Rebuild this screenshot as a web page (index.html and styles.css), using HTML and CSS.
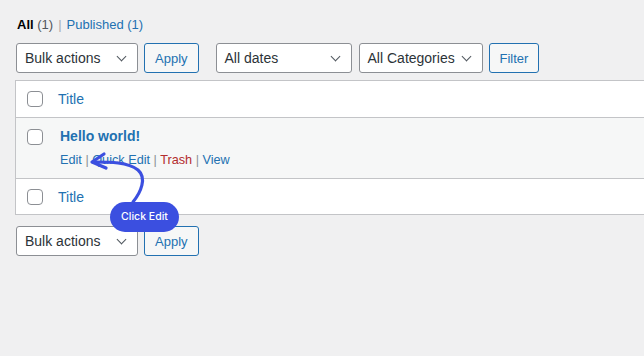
FILE: index.html
```html
<!DOCTYPE html>
<html lang="en">
  <head>
    <meta charset="UTF-8">
    <meta name="viewport" content="width=device-width, initial-scale=1.0">
    <title>Posts</title>
    <link rel="stylesheet" href="styles.css">
  </head>
  <body>
    <div class="page">
      <ul class="views">
        <li class="current">All <span class="count">(1)</span></li>
        <li class="sep">|</li>
        <li><a href="#">Published <span class="count">(1)</span></a></li>
      </ul>

      <div class="tablenav">
        <div class="select w-bulk">Bulk actions</div>
        <button class="btn">Apply</button>
        <div class="select w-dates gap-left">All dates</div>
        <div class="select w-cats">All Categories</div>
        <button class="btn">Filter</button>
      </div>

      <div class="list-table">
        <div class="row head">
          <span class="check"></span>
          <a href="#" class="col-title">Title</a>
        </div>
        <div class="row post">
          <span class="check"></span>
          <div class="post-body">
            <a href="#" class="post-title">Hello world!</a>
            <div class="row-actions">
              <a href="#">Edit</a> <span class="bar">|</span>
              <a href="#">Quick Edit</a> <span class="bar">|</span>
              <a href="#" class="trash">Trash</a> <span class="bar">|</span>
              <a href="#">View</a>
            </div>
          </div>
        </div>
        <div class="row foot">
          <span class="check"></span>
          <a href="#" class="col-title">Title</a>
        </div>
      </div>

      <div class="tablenav bottom">
        <div class="select w-bulk">Bulk actions</div>
        <button class="btn">Apply</button>
      </div>

      <!-- walkthrough hint -->
      <svg class="hint-arrow" width="644" height="356" viewBox="0 0 644 356">
        <path d="M133 202 C 141 192, 147 178, 138 170 C 128 162, 110 162, 93 162" />
        <path d="M104 154 L92 162 L106 168" />
      </svg>
      <div class="hint">Click Edit</div>
    </div>
  </body>
</html>
```

FILE: styles.css
```css
body {
  margin: 0;
  background-color: #f0f0f1;
  color: #3c434a;
  font-family: "Liberation Sans", Arial, sans-serif;
  font-size: 13px;
  overflow: hidden;
}

a {
  color: #2271b1;
  text-decoration: none;
}

.page {
  position: relative;
  width: 644px;
  height: 356px;
  padding-left: 16px;
  box-sizing: border-box;
  overflow: hidden;
}

.views {
  list-style: none;
  margin: 0;
  padding: 15px 0 0 1px;
  display: flex;
  gap: 5px;
  height: 20px;
  line-height: 20px;
}

.views .current {
  color: #000;
  font-weight: 600;
}

.views .current .count {
  color: #50575e;
  font-weight: 400;
}

.views .sep {
  color: #a7aaad;
}

.tablenav {
  display: flex;
  gap: 6px;
  margin-top: 8px;
  height: 30px;
}

.tablenav.bottom {
  margin-top: 11px;
}

.select {
  position: relative;
  height: 30px;
  box-sizing: border-box;
  border: 1px solid #8c8f94;
  border-radius: 3px;
  background-color: #fff;
  color: #2c3338;
  font-size: 14px;
  line-height: 28px;
  padding: 0 24px 0 8px;
}

.select::after {
  content: "";
  position: absolute;
  right: 12px;
  top: 9px;
  width: 6px;
  height: 6px;
  border-right: 1.6px solid #50575e;
  border-bottom: 1.6px solid #50575e;
  transform: rotate(45deg);
}

.w-bulk { width: 122px; }
.w-dates { width: 136px; }
.w-cats { width: 124px; margin-left: 1px; }
.gap-left { margin-left: 11px; }

.btn {
  height: 30px;
  box-sizing: border-box;
  border: 1px solid #2271b1;
  border-radius: 3px;
  background-color: #f6f7f7;
  color: #2271b1;
  font-family: inherit;
  font-size: 13px;
  padding: 0 10px;
}

.list-table {
  margin-top: 7px;
  margin-left: -1px;
  width: 628px;
  background-color: #fff;
  border: 1px solid #c3c4c7;
  border-right: none;
}

.row {
  display: flex;
  align-items: center;
  padding-left: 11px;
}

.row.head {
  height: 36px;
  border-bottom: 1px solid #c3c4c7;
}

.row.post {
  height: 60px;
  align-items: flex-start;
  background-color: #f6f7f7;
}

.row.foot {
  height: 35px;
  border-top: 1px solid #c3c4c7;
}

.check {
  width: 16px;
  height: 16px;
  box-sizing: border-box;
  border: 1px solid #8c8f94;
  border-radius: 4px;
  background-color: #fff;
  flex-shrink: 0;
}

.row.post .check {
  margin-top: 11px;
}

.col-title {
  margin-left: 15px;
  font-size: 14px;
}

.post-body {
  margin-left: 17px;
  padding-top: 8px;
}

.post-title {
  display: block;
  font-size: 14px;
  font-weight: 700;
  line-height: 20px;
}

.row-actions {
  margin-top: 4px;
  line-height: 20px;
  font-size: 12.7px;
}

.row-actions .bar {
  color: #8c8f94;
}

.row-actions .trash {
  color: #b32d2e;
}

.hint-arrow {
  position: absolute;
  left: 0;
  top: 0;
  pointer-events: none;
}

.hint-arrow path {
  fill: none;
  stroke: #3b4fe0;
  stroke-width: 3.2;
  stroke-linecap: round;
  stroke-linejoin: round;
}

.hint {
  position: absolute;
  left: 110px;
  top: 202px;
  width: 69px;
  height: 30px;
  border-radius: 15px;
  background-color: #3b4fe0;
  color: #fff;
  font-family: Inter, sans-serif;
  font-size: 10.5px;
  font-weight: 500;
  line-height: 30px;
  text-align: center;
}
```
